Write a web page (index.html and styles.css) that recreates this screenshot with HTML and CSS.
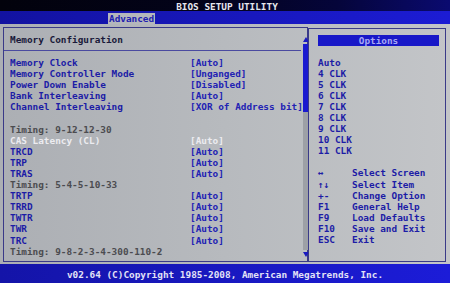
FILE: index.html
```html
<!DOCTYPE html>
<html>
<head>
<meta charset="utf-8">
<link rel="stylesheet" href="styles.css">
</head>
<body>
<div class="screen">
  <header class="titlebar"><span class="title">BIOS SETUP UTILITY</span></header>
  <nav class="tabbar"><span class="tab">Advanced</span></nav>
  <main class="main">
    <section class="leftbox">
      <div class="content">
        <h1 class="heading">Memory Configuration</h1>
        <div class="sep"></div>
        <ul class="rows">
          <li class="row"><span class="label">Memory Clock</span><span class="val">[Auto]</span></li>
          <li class="row"><span class="label">Memory Controller Mode</span><span class="val">[Unganged]</span></li>
          <li class="row"><span class="label">Power Down Enable</span><span class="val">[Disabled]</span></li>
          <li class="row"><span class="label">Bank Interleaving</span><span class="val">[Auto]</span></li>
          <li class="row"><span class="label">Channel Interleaving</span><span class="val">[XOR of Address bit]</span></li>
          <li class="row blank"></li>
          <li class="row timing">Timing: 9-12-12-30</li>
          <li class="row selected"><span class="label">CAS Latency (CL)</span><span class="val">[Auto]</span></li>
          <li class="row"><span class="label">TRCD</span><span class="val">[Auto]</span></li>
          <li class="row"><span class="label">TRP</span><span class="val">[Auto]</span></li>
          <li class="row"><span class="label">TRAS</span><span class="val">[Auto]</span></li>
          <li class="row timing">Timing: 5-4-5-10-33</li>
          <li class="row"><span class="label">TRTP</span><span class="val">[Auto]</span></li>
          <li class="row"><span class="label">TRRD</span><span class="val">[Auto]</span></li>
          <li class="row"><span class="label">TWTR</span><span class="val">[Auto]</span></li>
          <li class="row"><span class="label">TWR</span><span class="val">[Auto]</span></li>
          <li class="row"><span class="label">TRC</span><span class="val">[Auto]</span></li>
          <li class="row timing">Timing: 9-8-2-3-4-300-110-2</li>
        </ul>
      </div>
      <div class="scrollbar">
        <span class="arrow up"></span>
        <span class="thumb"></span>
        <span class="track"></span>
        <span class="arrow down"></span>
      </div>
    </section>
    <aside class="rightbox">
      <div class="options-title">Options</div>
      <ul class="opts">
        <li>Auto</li>
        <li>4 CLK</li>
        <li>5 CLK</li>
        <li>6 CLK</li>
        <li>7 CLK</li>
        <li>8 CLK</li>
        <li>9 CLK</li>
        <li>10 CLK</li>
        <li>11 CLK</li>
      </ul>
      <ul class="help">
        <li><span class="key">&harr;</span><span>Select Screen</span></li>
        <li><span class="key">&uarr;&darr;</span><span>Select Item</span></li>
        <li><span class="key">+-</span><span>Change Option</span></li>
        <li><span class="key">F1</span><span>General Help</span></li>
        <li><span class="key">F9</span><span>Load Defaults</span></li>
        <li><span class="key">F10</span><span>Save and Exit</span></li>
        <li><span class="key">ESC</span><span>Exit</span></li>
      </ul>
    </aside>
  </main>
  <footer class="footer">v02.64 (C)Copyright 1985-2008, American Megatrends, Inc.</footer>
</div>
</body>
</html>
```

FILE: styles.css
```css
* { box-sizing: border-box; }
html, body { margin: 0; padding: 0; background: #000; }
.screen {
  width: 450px;
  height: 283px;
  display: flex;
  flex-direction: column;
  overflow: hidden;
  font-family: "DejaVu Sans Mono", "Liberation Mono", monospace;
  font-weight: bold;
  font-size: 9.4px;
  letter-spacing: 0;
}
.titlebar {
  height: 11px;
  background: linear-gradient(to right, #02020c 0%, #03031a 45%, #05053a 75%, #0a0a70 100%);
  color: #e6e6ee;
  line-height: 11px;
  text-align: center;
  padding-left: 4px;
  padding-top: 1px;
}
.tabbar {
  height: 13px;
  background: linear-gradient(to right, #1212a0 0%, #1717b8 45%, #1c1cd4 100%);
  display: flex;
  align-items: flex-end;
  padding-left: 108px;
}
.tab {
  height: 11px;
  line-height: 11px;
  padding: 0 1px;
  background: #b4b7bc;
  color: #2020b0;
}
.main {
  height: 240px;
  background: linear-gradient(to right, #acafb4 0%, #b7babe 50%, #c3c5c8 100%);
  display: flex;
  padding: 3px 4px 2px 3px;
  gap: 0;
}
.leftbox {
  width: 305px;
  border: 1px solid #3a3a88;
  display: flex;
}
.content {
  flex: 1;
  padding: 6px 0 0 6px;
}
.heading {
  margin: 0;
  font-size: 9.4px;
  line-height: 11px;
  color: #1a1a3a;
  font-weight: bold;
}
.sep {
  height: 1px;
  background: #4a4aa0;
  margin: 5px 2px 0 -6px;
}
.rows {
  list-style: none;
  margin: 6px 0 0 0;
  padding: 0;
}
.row {
  display: flex;
  height: 11.1px;
  line-height: 11.1px;
  color: #1c1ca6;
  white-space: pre;
}
.label { width: 180px; }
.val { color: #2222b4; }
.timing { color: #4c4c50; }
.selected .label, .selected .val { color: #ececf0; }
.scrollbar {
  width: 6px;
  margin: 8px 1px 3px 0;
  display: flex;
  flex-direction: column;
  align-items: center;
}
.arrow {
  width: 0;
  height: 0;
  border-left: 3px solid transparent;
  border-right: 3px solid transparent;
}
.arrow.up { border-bottom: 5px solid #1a1ac0; margin: 1px 0 2px; }
.arrow.down { border-top: 5px solid #1a1ac0; margin: 2px 0 1px; }
.thumb {
  width: 6px;
  height: 68px;
  background: #1a1ad0;
}
.track {
  width: 6px;
  flex: 1;
  background: #9da0a6;
}
.rightbox {
  width: 139px;
  margin-left: 0;
  margin-top: 1px;
  border: 1px solid #3a3a88;
  border-left: 1px solid #3a3a88;
  padding: 6px 6px 0 9px;
}
.options-title {
  height: 11px;
  line-height: 11px;
  background: #1818c8;
  color: #a8a8f4;
  text-align: center;
}
.opts, .help {
  list-style: none;
  margin: 0;
  padding: 0;
  color: #1c1ca6;
}
.opts { margin-top: 10.5px; }
.help { margin-top: 11.1px; }
.opts li, .help li {
  height: 11.1px;
  line-height: 11.1px;
  white-space: pre;
}
.help li { display: flex; }
.key { width: 34px; }
.footer {
  height: 19px;
  background: linear-gradient(to right, #1414a8 0%, #1818c0 50%, #1c1cd8 100%);
  color: #e2e2f6;
  text-align: center;
  line-height: 19px;
  padding-top: 1px;
}
```
